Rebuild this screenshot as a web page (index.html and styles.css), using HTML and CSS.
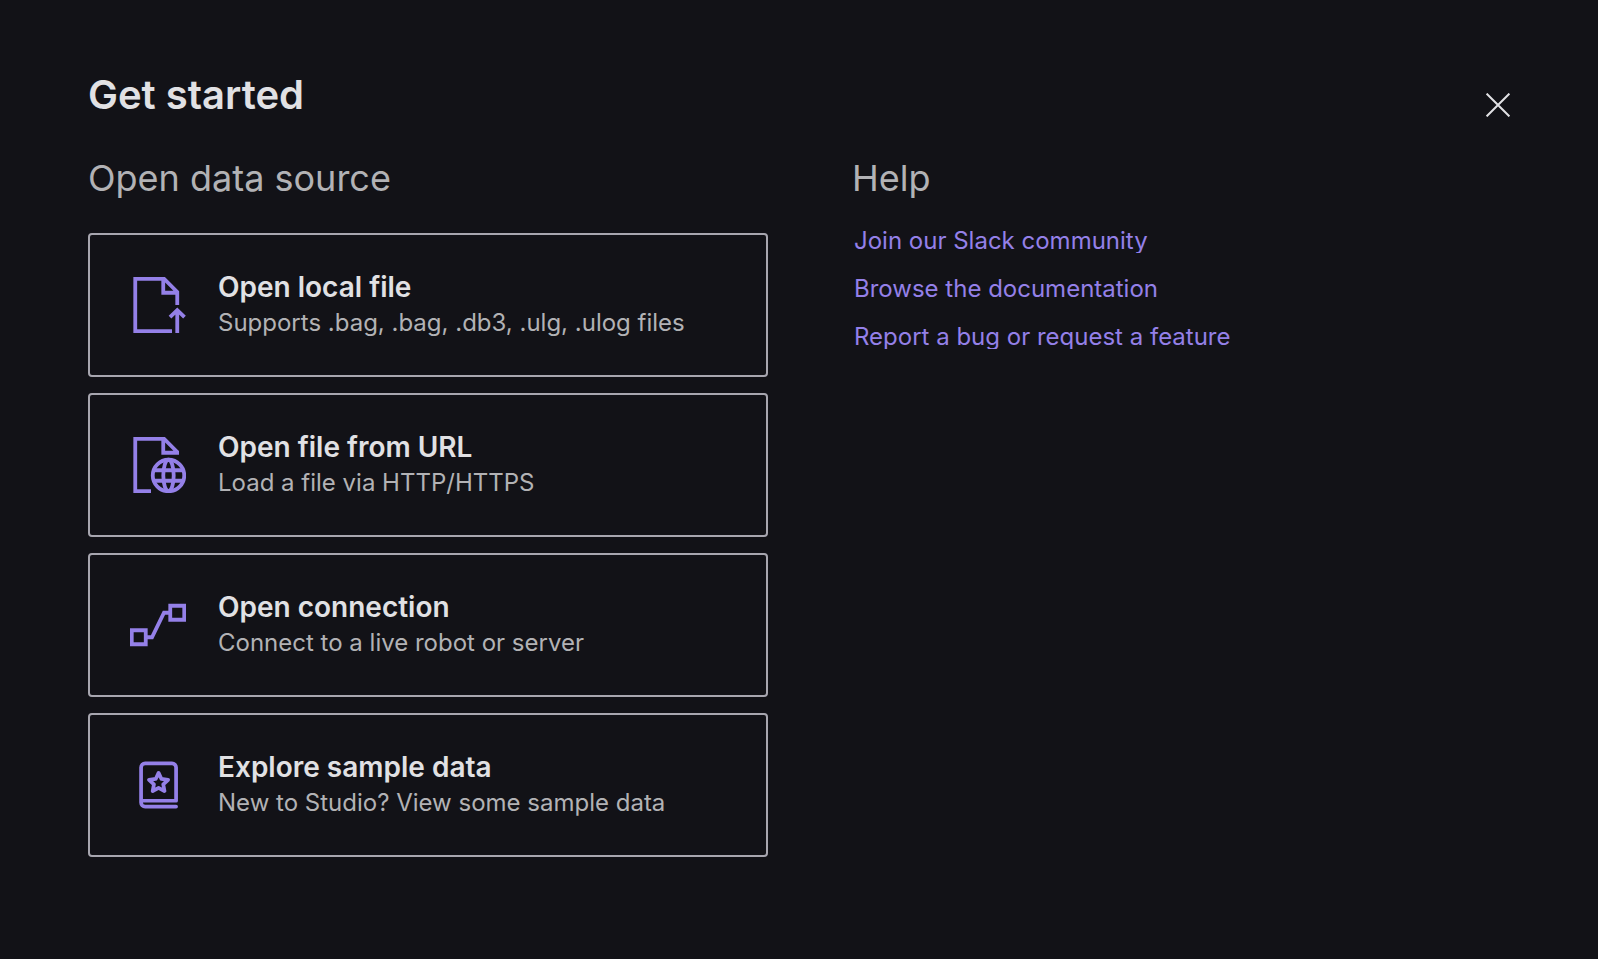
FILE: index.html
```html
<!DOCTYPE html>
<html lang="en">
<head>
<meta charset="utf-8">
<meta name="viewport" content="width=device-width, initial-scale=1">
<title>Get started</title>
<link rel="stylesheet" href="styles.css">
</head>
<body>
<main class="dialog">
  <header class="dialog-header">
    <h1 class="dialog-title">Get started</h1>
    <button class="close-button" type="button" aria-label="Close">
      <svg class="close-icon" viewBox="0 0 24 24" aria-hidden="true"><path d="M.6.6l22.8 22.8M23.4.6L.6 23.4"/></svg>
    </button>
  </header>
  <div class="columns">
    <section>
      <h2 class="section-title">Open data source</h2>
      <div class="source-list">
        <button class="source" type="button">
          <svg class="source-icon" viewBox="0 0 56 56" aria-hidden="true"><path d="M42 54.25H5.25V1.75H34L47.25 15V28M33.25 1.75v14h14M47.25 56V33M40 40.2l7.25-7.1 7.25 7.1"/></svg>
          <span class="source-text">
            <span class="source-title">Open local file</span>
            <span class="source-detail">Supports .bag, .bag, .db3, .ulg, .ulog files</span>
          </span>
        </button>
        <button class="source" type="button">
          <svg class="source-icon" viewBox="0 0 56 56" aria-hidden="true"><path d="M21 54.25H5.25V1.75H34L47.5 15.25M33.25 1.75v14H49"/><circle cx="38.5" cy="38.5" r="15.75"/><ellipse cx="38.5" cy="38.5" rx="5.2" ry="15.75"/><path d="M24 33.25h29M24 43.75h29"/></svg>
          <span class="source-text">
            <span class="source-title">Open file from URL</span>
            <span class="source-detail">Load a file via HTTP/HTTPS</span>
          </span>
        </button>
        <button class="source" type="button">
          <svg class="source-icon" viewBox="0 0 56 56" aria-hidden="true"><path d="M1.75 33.25h14v14h-14zM40.25 8.75h14v14h-14zM16 40.25h6L34 15.75h6"/></svg>
          <span class="source-text">
            <span class="source-title">Open connection</span>
            <span class="source-detail">Connect to a live robot or server</span>
          </span>
        </button>
        <button class="source" type="button">
          <svg class="source-icon source-icon-book" viewBox="0 0 24 24" aria-hidden="true"><path d="M19.75 18.75h-15V4.5A1.75 1.75 0 0 1 6.5 2.75H18A1.75 1.75 0 0 1 19.75 4.5zM4.75 18.75v.75a1.75 1.75 0 0 0 1.75 1.75h13.25M12.25 6.8l1.23 2.6 2.86.37-2.09 1.98.53 2.83-2.53-1.38-2.53 1.38.53-2.83-2.09-1.98 2.86-.37z"/></svg>
          <span class="source-text">
            <span class="source-title">Explore sample data</span>
            <span class="source-detail">New to Studio? View some sample data</span>
          </span>
        </button>
      </div>
    </section>
    <section>
      <h2 class="section-title">Help</h2>
      <nav class="help-links" aria-label="Help">
        <a class="help-link" href="#slack">Join our Slack community</a>
        <a class="help-link" href="#docs">Browse the documentation</a>
        <a class="help-link" href="#feedback">Report a bug or request a feature</a>
      </nav>
    </section>
  </div>
</main>
</body>
</html>
```
FILE: styles.css
```css
* {
  box-sizing: border-box;
}

body {
  margin: 0;
  min-height: 100vh;
  background: #121217;
  color: #e1e1e4;
  font-family: Inter, "Liberation Sans", sans-serif;
}

button {
  margin: 0;
  background: none;
  color: inherit;
  font: inherit;
  cursor: pointer;
}

.dialog {
  padding: 73px 66px 73px 88px;
}

.dialog-header {
  display: flex;
  align-items: flex-start;
  justify-content: space-between;
  margin-bottom: 20px;
}

.dialog-title {
  margin: 0;
  font-size: 40px;
  font-weight: 600;
  line-height: 44px;
}

.close-button {
  display: flex;
  padding: 20px 22px;
  border: 0;
}

.close-icon {
  width: 24px;
  height: 24px;
  fill: none;
  stroke: currentColor;
  stroke-width: 2;
}

.columns {
  display: grid;
  grid-template-columns: 1fr 1fr;
  gap: 84px;
}

.section-title {
  margin: 0;
  color: #b2b2b5;
  font-size: 36px;
  font-weight: 400;
  line-height: 42px;
}

.source-list {
  display: grid;
  gap: 16px;
  margin-top: 34px;
}

.source {
  display: flex;
  align-items: center;
  gap: 32px;
  min-height: 144px;
  padding: 32px 40px;
  border: 2px solid #a7a6af;
  border-radius: 4px;
  text-align: left;
}

.source-icon {
  flex: none;
  width: 56px;
  height: 56px;
  fill: none;
  stroke: #9480e8;
  stroke-width: 3.8;
}

.source-icon-book {
  stroke-width: 1.6;
  stroke-linecap: round;
  stroke-linejoin: round;
}

.source-text {
  display: flex;
  flex-direction: column;
}

.source-title {
  font-size: 28px;
  font-weight: 600;
  line-height: 36px;
}

.source-detail {
  color: #b2b2b5;
  font-size: 24px;
  line-height: 36px;
}

.help-links {
  display: flex;
  flex-direction: column;
  align-items: flex-start;
  gap: 24px;
  margin-top: 30px;
  padding-left: 2px;
}

.help-link {
  overflow: hidden;
  color: #9480e8;
  font-size: 24px;
  line-height: 24px;
  text-decoration: none;
}
```
